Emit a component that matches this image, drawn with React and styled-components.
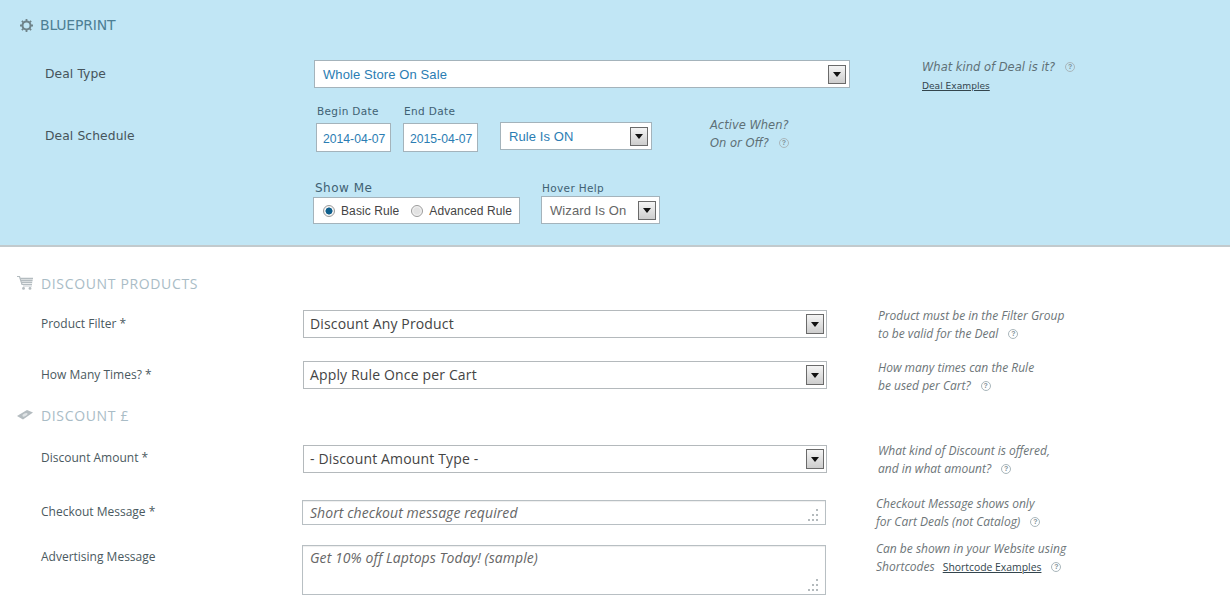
import React from "react";
import styled, { createGlobalStyle } from "styled-components";

const GlobalStyle = createGlobalStyle`
  html, body {
    margin: 0;
    padding: 0;
    background: #fff;
    font-family: "Open Sans", "Liberation Sans", sans-serif;
    overflow: hidden;
  }
`;

const Page = styled.div`
  width: 1230px;
  height: 597px;
  overflow: hidden;
`;

const Blueprint = styled.section`
  height: 247px;
  box-sizing: border-box;
  background: #c1e6f5;
  border-bottom: 2px solid #c2cacd;
  padding: 15px 0 0 20px;
`;

const Heading = styled.h2`
  display: flex;
  align-items: center;
  margin: ${(p) => p.$mt || 0}px 0 0;
  height: 20px;
  font-family: ${(p) => (p.$light ? '"Open Sans"' : '"DejaVu Sans"')}, sans-serif;
  font-weight: 400;
  font-size: 14px;
  letter-spacing: ${(p) => (p.$light ? "0.65px" : "-0.2px")};
  color: ${(p) => (p.$light ? "#a9bcc6" : "#4d7f94")};
  svg {
    flex: none;
    margin-right: ${(p) => (p.$light ? "8px" : "7px")};
  }
`;

const TopRow = styled.div`
  display: grid;
  grid-template-columns: 269px 536px 1fr;
  padding-left: 25px;
`;

const TopLabel = styled.div`
  font-family: "DejaVu Sans", sans-serif;
  font-size: 12.3px;
  letter-spacing: 0.1px;
  color: #46545b;
  line-height: 18px;
`;

const Select = styled.div`
  display: flex;
  align-items: center;
  justify-content: space-between;
  box-sizing: border-box;
  width: ${(p) => p.$w}px;
  height: 28px;
  padding: 0 ${(p) => (p.$open ? 2 : 3)}px 0 ${(p) => (p.$open ? 6 : 8)}px;
  background: #fff;
  border: 1px solid ${(p) => (p.$open ? "#b4b9bc" : "#a4b3bb")};
  font-family: ${(p) => (p.$open ? '"Open Sans"' : '"Liberation Sans"')}, sans-serif;
  font-size: ${(p) => (p.$open ? 14 : 13)}px;
  color: ${(p) => p.$color || "#2b7db3"};
  letter-spacing: ${(p) => (p.$open ? "0.15px" : "0.1px")};
  white-space: nowrap;
`;

const SelectText = styled.span`
  margin-top: ${(p) => (p.$up ? -2 : 0)}px;
`;

const Arrow = styled.span`
  flex: none;
  position: relative;
  box-sizing: border-box;
  width: 18px;
  height: ${(p) => p.$h || 19}px;
  border: 1px solid #6a6a6a;
  background: linear-gradient(#f4f4f4, #cdcdcd);
  &::after {
    content: "";
    position: absolute;
    left: 4px;
    top: ${(p) => (p.$h ? 7 : 6)}px;
    border-left: 4px solid transparent;
    border-right: 4px solid transparent;
    border-top: 5px solid #111;
  }
`;

const DealTypeRow = styled(TopRow)`
  margin-top: 25px;
  height: 28px;
  & > ${TopLabel} {
    margin-top: 5px;
  }
`;

const ScheduleRow = styled(TopRow)`
  margin-top: 16px;
  height: 70px;
  & > ${TopLabel} {
    margin-top: 23px;
  }
`;

const ScheduleFields = styled.div`
  display: flex;
  align-items: flex-start;
  padding-left: 2px;
`;

const DateField = styled.div`
  width: 87px;
`;

const MiniLabel = styled.div`
  font-family: "DejaVu Sans", sans-serif;
  font-size: ${(p) => p.$size || 10.5}px;
  letter-spacing: ${(p) => p.$ls || 0.35}px;
  color: #3f6173;
  line-height: 14px;
  margin-left: ${(p) => p.$ml || 1}px;
`;

const DateInput = styled.input`
  display: block;
  box-sizing: border-box;
  width: 75px;
  height: 29px;
  margin-top: 5px;
  padding: 3px 0 0 6px;
  border: 1px solid #a4b3bb;
  background: #fff;
  font-family: "Liberation Sans", sans-serif;
  font-size: 12.2px;
  color: #2b7db3;
  outline: none;
`;

const ScheduleSelect = styled.div`
  margin: 18px 0 0 10px;
`;

const HelpColumn = styled.div`
  font-family: "DejaVu Sans", sans-serif;
  font-style: italic;
  font-size: 11.5px;
  line-height: 18px;
  color: #5e7076;
  margin: -2px 0 0 72px;
  white-space: nowrap;
`;

const ScheduleHelp = styled(HelpColumn)`
  margin: 12px 0 0 58px;
`;

const QuestionMark = styled.span`
  display: inline-flex;
  align-items: center;
  justify-content: center;
  box-sizing: border-box;
  width: 10px;
  height: 10px;
  margin-left: ${(p) => p.$ml || 10}px;
  border: 1px solid #a9b6bb;
  border-radius: 50%;
  font-family: "Liberation Sans", sans-serif;
  font-style: normal;
  font-weight: 700;
  font-size: 7px;
  line-height: 1;
  color: #7f9096;
  vertical-align: 2px;
`;

const SmallLink = styled.a`
  font-family: ${(p) => (p.$open ? '"Open Sans"' : '"DejaVu Sans"')}, sans-serif;
  font-style: normal;
  font-size: ${(p) => (p.$open ? 10.4 : 9.1)}px;
  margin-left: ${(p) => (p.$open ? 8 : 0)}px;
  color: #33454d;
  text-decoration: underline;
`;

const OptionsRow = styled.div`
  display: flex;
  margin: 0 0 0 293px;
  padding-top: 7px;
`;

const ShowMe = styled.div`
  width: 228px;
`;

const HoverField = styled.div`
  ${Select} {
    margin-top: 1px;
  }
`;

const RadioBox = styled.div`
  display: flex;
  align-items: center;
  box-sizing: border-box;
  width: 207px;
  height: 27px;
  margin-top: 2px;
  padding-left: 9px;
  background: #fff;
  border: 1px solid #a4b3bb;
  font-family: "Liberation Sans", sans-serif;
  font-size: 12px;
  letter-spacing: 0.1px;
  color: #444;
`;

const Radio = styled.span`
  flex: none;
  box-sizing: border-box;
  width: 12px;
  height: 12px;
  margin-right: 6px;
  border-radius: 50%;
  border: 1px solid #9a9a9a;
  background: ${(p) =>
    p.$on
      ? "radial-gradient(circle, #0f5f8c 0 3.2px, #f4f4f4 3.8px)"
      : "radial-gradient(circle, #e2e2e2 0 3px, #f6f6f6 5px)"};
`;

const RadioText = styled.span`
  margin-right: ${(p) => p.$mr || 0}px;
`;

const Lower = styled.section`
  padding: 26px 0 0 17px;
`;

const Row = styled.div`
  display: grid;
  grid-template-columns: 262px 524px 1fr;
  align-items: start;
  margin-top: ${(p) => p.$mt}px;
  padding-left: 24px;
  height: ${(p) => p.$h || 28}px;
`;

const FieldLabel = styled.div`
  font-size: 12px;
  line-height: 16px;
  color: #4a5960;
  margin-top: ${(p) => p.$mt ?? 6}px;
  white-space: pre;
`;

const Note = styled.div`
  font-style: italic;
  font-size: 12px;
  line-height: 18px;
  color: #6d7578;
  white-space: nowrap;
  margin: ${(p) => p.$mt ?? -3}px 0 0 ${(p) => p.$ml ?? 51}px;
`;

const TextBox = styled.div`
  position: relative;
  box-sizing: border-box;
  width: 524px;
  height: ${(p) => p.$h}px;
  margin-left: -1px;
  border: 1px solid #b8bfc3;
  box-shadow: inset 0 1px 1px #eee;
`;

const TextArea = styled.textarea`
  display: block;
  box-sizing: border-box;
  width: 100%;
  height: 100%;
  padding: 2px 7px 0;
  border: 0;
  background: transparent;
  resize: none;
  outline: none;
  font-family: "Open Sans", sans-serif;
  font-style: italic;
  font-size: 14px;
  letter-spacing: 0.07px;
  line-height: 20px;
  color: #666;
  &::placeholder {
    color: #666;
    opacity: 1;
  }
`;

const Grip = styled.svg`
  position: absolute;
  right: 6px;
  bottom: 2px;
`;

const ResizeGrip = () => (
  <Grip width="11" height="13" viewBox="0 0 11 13" fill="#b4babd">
    <rect x="8" y="0" width="2" height="2" />
    <rect x="4" y="5" width="2" height="2" />
    <rect x="8" y="5" width="2" height="2" />
    <rect x="0" y="10" width="2" height="2" />
    <rect x="4" y="10" width="2" height="2" />
    <rect x="8" y="10" width="2" height="2" />
  </Grip>
);

const GearIcon = () => (
  <svg width="13" height="13" viewBox="0 0 13 13">
    <circle cx="6.5" cy="6.5" r="4" fill="none" stroke="#6f8389" strokeWidth="2" />
    <path
      d="M6.5 0v2M6.5 11v2M0 6.5h2M11 6.5h2M1.9 1.9l1.4 1.4M9.7 9.7l1.4 1.4M1.9 11.1l1.4-1.4M9.7 3.3l1.4-1.4"
      stroke="#6f8389"
      strokeWidth="1.8"
    />
  </svg>
);

const CartIcon = () => (
  <svg width="16" height="14" viewBox="0 0 16 14">
    <path d="M0 .5h2.5L5 8.5h10" fill="none" stroke="#b4bcc0" strokeWidth="1.2" />
    <path d="M3.2 2.5H16M3.8 4.5H15.6M4.4 6.5H15.2" stroke="#b4bcc0" strokeWidth="1.3" />
    <path d="M6 10h9" stroke="#c6ccd0" strokeWidth="1" />
    <circle cx="6.5" cy="12.4" r="1.4" fill="#b4bcc0" />
    <circle cx="13" cy="12.4" r="1.4" fill="#b4bcc0" />
  </svg>
);

const MoneyIcon = () => (
  <svg width="16" height="10" viewBox="0 0 16 10">
    <path d="M0 6 10 0l6 2.5L6 9.5z" fill="#b4bcc0" />
    <ellipse cx="8" cy="4.8" rx="2.8" ry="1.4" fill="#dfe3e5" transform="rotate(-25 8 4.8)" />
  </svg>
);

export default function App() {
  return (
    <Page>
      <GlobalStyle />
      <Blueprint>
        <Heading>
          <GearIcon />
          BLUEPRINT
        </Heading>
        <DealTypeRow>
          <TopLabel>Deal Type</TopLabel>
          <Select $w={536}>
            Whole Store On Sale
            <Arrow />
          </Select>
          <HelpColumn>
            What kind of Deal is it?
            <QuestionMark>?</QuestionMark>
            <br />
            <SmallLink href="#">Deal Examples</SmallLink>
          </HelpColumn>
        </DealTypeRow>
        <ScheduleRow>
          <TopLabel>Deal Schedule</TopLabel>
          <ScheduleFields>
            <DateField>
              <MiniLabel>Begin Date</MiniLabel>
              <DateInput readOnly value="2014-04-07" />
            </DateField>
            <DateField>
              <MiniLabel>End Date</MiniLabel>
              <DateInput readOnly value="2015-04-07" />
            </DateField>
            <ScheduleSelect>
              <Select $w={152}>
                Rule Is ON
                <Arrow />
              </Select>
            </ScheduleSelect>
            <ScheduleHelp>
              Active When?
              <br />
              On or Off?
              <QuestionMark>?</QuestionMark>
            </ScheduleHelp>
          </ScheduleFields>
        </ScheduleRow>
        <OptionsRow>
          <ShowMe>
            <MiniLabel $size={12} $ml={2} $ls={0.5}>
              Show Me
            </MiniLabel>
            <RadioBox>
              <Radio $on />
              <RadioText $mr={12}>Basic Rule</RadioText>
              <Radio />
              <RadioText>Advanced Rule</RadioText>
            </RadioBox>
          </ShowMe>
          <HoverField>
            <MiniLabel>Hover Help</MiniLabel>
            <Select $w={119} $color="#666">
              Wizard Is On
              <Arrow />
            </Select>
          </HoverField>
        </OptionsRow>
      </Blueprint>
      <Lower>
        <Heading $light>
          <CartIcon />
          DISCOUNT PRODUCTS
        </Heading>
        <Row $mt={17}>
          <FieldLabel>Product Filter *</FieldLabel>
          <Select $w={524} $open $color="#444">
            <SelectText $up>Discount Any Product</SelectText>
            <Arrow $h={20} />
          </Select>
          <Note>
            Product must be in the Filter Group
            <br />
            to be valid for the Deal
            <QuestionMark>?</QuestionMark>
          </Note>
        </Row>
        <Row $mt={23}>
          <FieldLabel>How Many Times? *</FieldLabel>
          <Select $w={524} $open $color="#444">
            <SelectText $up>Apply Rule Once per Cart</SelectText>
            <Arrow $h={20} />
          </Select>
          <Note $mt={-2}>
            How many times can the Rule
            <br />
            be used per Cart?
            <QuestionMark>?</QuestionMark>
          </Note>
        </Row>
        <Heading $light $mt={16}>
          <MoneyIcon />
          DISCOUNT £
        </Heading>
        <Row $mt={20}>
          <FieldLabel $mt={5}>Discount Amount *</FieldLabel>
          <Select $w={524} $open $color="#444">
            <SelectText $up>- Discount Amount Type -</SelectText>
            <Arrow $h={20} />
          </Select>
          <Note>
            What kind of Discount is offered,
            <br />
            and in what amount?
            <QuestionMark>?</QuestionMark>
          </Note>
        </Row>
        <Row $mt={27} $h={25}>
          <FieldLabel $mt={4}>Checkout Message *</FieldLabel>
          <TextBox $h={25}>
            <TextArea readOnly placeholder="Short checkout message required" />
            <ResizeGrip />
          </TextBox>
          <Note $ml={49} $mt={-5}>
            Checkout Message shows only
            <br />
            for Cart Deals (not Catalog)
            <QuestionMark>?</QuestionMark>
          </Note>
        </Row>
        <Row $mt={20} $h={50}>
          <FieldLabel $mt={4}>Advertising Message</FieldLabel>
          <TextBox $h={50}>
            <TextArea readOnly placeholder="Get 10% off Laptops Today! (sample)" />
            <ResizeGrip />
          </TextBox>
          <Note $ml={49} $mt={-5}>
            Can be shown in your Website using
            <br />
            Shortcodes
            <SmallLink href="#" $open>
              Shortcode Examples
            </SmallLink>
            <QuestionMark>?</QuestionMark>
          </Note>
        </Row>
      </Lower>
    </Page>
  );
}
